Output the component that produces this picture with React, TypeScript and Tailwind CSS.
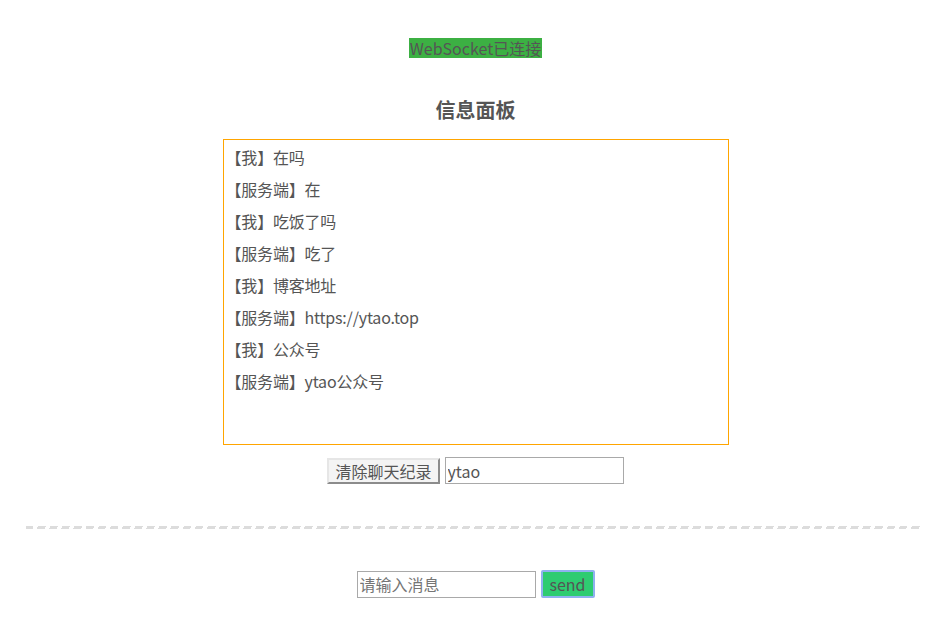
import React from 'react';

const messages: { from: string; text: string }[] = [
  { from: '我', text: '在吗' },
  { from: '服务端', text: '在' },
  { from: '我', text: '吃饭了吗' },
  { from: '服务端', text: '吃了' },
  { from: '我', text: '博客地址' },
  { from: '服务端', text: 'https://ytao.top' },
  { from: '我', text: '公众号' },
  { from: '服务端', text: 'ytao公众号' },
];

const App: React.FC = () => {
  return (
    <div
      className="min-h-[626px] bg-white pl-[8px] pt-[38px] text-[#555] flex flex-col items-center"
      style={{ fontFamily: '"Noto Sans CJK SC", "Noto Sans", sans-serif' }}
    >
      <span className="h-[20px] leading-[20px] bg-[#3cb043] text-[16px] px-px">WebSocket已连接</span>

      <h3 className="mt-[38px] text-[20px] leading-[28px] font-bold text-[#555]">信息面板</h3>

      <div className="mt-[15px] w-[506px] h-[306px] border border-[#ffa500] pl-[2px] pt-[1px]">
        {messages.map((m, i) => (
          <div key={i} className="text-[16px] leading-[32px] tracking-[-0.2px]">
            【{m.from}】{m.text}
          </div>
        ))}
      </div>

      <div className="mt-[12px] flex items-center gap-[5px]">
        <button className="h-[26px] px-[6px] text-[16px] leading-[20px] bg-[#f4f4f4] text-[#555] border-2 border-t-[#e6e6e6] border-l-[#e6e6e6] border-b-[#8c8c8c] border-r-[#8c8c8c]">
          清除聊天纪录
        </button>
        <input
          defaultValue="ytao"
          className="w-[179px] h-[27px] px-[2px] text-[16px] text-[#555] border border-[#a9a9a9] outline-none"
        />
      </div>

      <div className="mt-[42px] self-start ml-[18px] w-[896px] h-[3px] bg-[repeating-linear-gradient(115deg,#dcdcdc_0px,#dcdcdc_7px,transparent_7px,transparent_11px)]" />

      <div className="mt-[41px] flex items-center gap-[5px]">
        <input
          placeholder="请输入消息"
          className="w-[179px] h-[27px] px-[2px] text-[16px] text-[#555] placeholder:text-[#757575] border border-[#a9a9a9] outline-none"
        />
        <button className="w-[54px] h-[28px] text-[16px] leading-[20px] bg-[#2ecc71] text-[#555] border-2 border-[#8fb1ef] rounded-[2px]">
          send
        </button>
      </div>
    </div>
  );
};

export default App;
